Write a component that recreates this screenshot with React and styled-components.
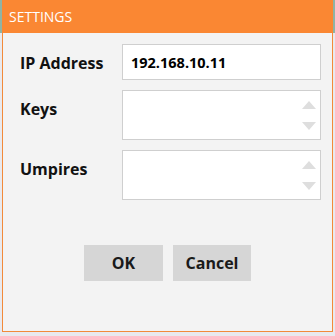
import React, { useState } from "react";
import styled, { createGlobalStyle } from "styled-components";

const GlobalStyle = createGlobalStyle`
  html, body {
    margin: 0;
    padding: 0;
    height: 336px;
    overflow: hidden;
    background: #e9e9ee;
    font-family: "Open Sans", "Noto Sans", "Liberation Sans", sans-serif;
  }
`;

const Desktop = styled.div`
  width: 335px;
  height: 336px;
  background: linear-gradient(#8fb3a4 0, #8fb3a4 33px, #e9e9ee 33px);
`;

const Window = styled.div`
  margin: 0 2px;
  width: 331px;
  height: 332px;
  box-sizing: border-box;
  border: 1px solid #f28a3a;
  border-top: none;
  background: #f3f3f3;
  display: flex;
  flex-direction: column;
`;

const TitleBar = styled.div`
  height: 33px;
  margin: 0 -1px;
  background: #fa8733;
  color: #ffffff;
  font-size: 14px;
  line-height: 33px;
  padding-left: 7px;
`;

const Form = styled.div`
  display: grid;
  grid-template-columns: 102px 199px;
  row-gap: 10px;
  padding: 11px 0 0 17px;
`;

const Label = styled.div`
  font-weight: 700;
  font-size: 16px;
  line-height: 20px;
  padding-top: 9px;
  color: #111;
`;

const TextBox = styled.input`
  box-sizing: border-box;
  height: 36px;
  width: 199px;
  border: 1px solid #cfcfcf;
  background: #fff;
  padding: 0 8px;
  font-family: inherit;
  font-weight: 700;
  font-size: 14.5px;
  color: #000;
  outline: none;
`;

const SpinBox = styled.div`
  box-sizing: border-box;
  height: 50px;
  width: 199px;
  border: 1px solid #cfcfcf;
  background: #fff;
  display: flex;
  justify-content: flex-end;
`;

const Arrows = styled.div`
  width: 22px;
  display: flex;
  flex-direction: column;
  justify-content: space-between;
  align-items: center;
  padding: 10px 0 9px;
`;

const Buttons = styled.div`
  display: flex;
  justify-content: center;
  gap: 10px;
  margin-top: 45px;
`;

const Button = styled.button`
  width: ${(p) => p.$w}px;
  height: 36px;
  border: none;
  background: #d6d6d6;
  font-family: inherit;
  font-weight: 700;
  font-size: 16px;
  color: #1a1a1a;
  padding: 0;
`;

const Tri = ({ down }) => (
  <svg width="14" height="8" viewBox="0 0 14 8">
    <polygon points={down ? "0,0 14,0 7,8" : "0,8 14,8 7,0"} fill="#dedede" />
  </svg>
);

const Spinner = () => (
  <SpinBox>
    <Arrows>
      <Tri />
      <Tri down />
    </Arrows>
  </SpinBox>
);

export default function App() {
  const [ip, setIp] = useState("192.168.10.11");

  return (
    <Desktop>
      <GlobalStyle />
      <Window>
        <TitleBar>SETTINGS</TitleBar>
        <Form>
          <Label>IP Address</Label>
          <TextBox value={ip} onChange={(e) => setIp(e.target.value)} />
          <Label>Keys</Label>
          <Spinner />
          <Label>Umpires</Label>
          <Spinner />
        </Form>
        <Buttons>
          <Button $w={79}>OK</Button>
          <Button $w={78}>Cancel</Button>
        </Buttons>
      </Window>
    </Desktop>
  );
}
